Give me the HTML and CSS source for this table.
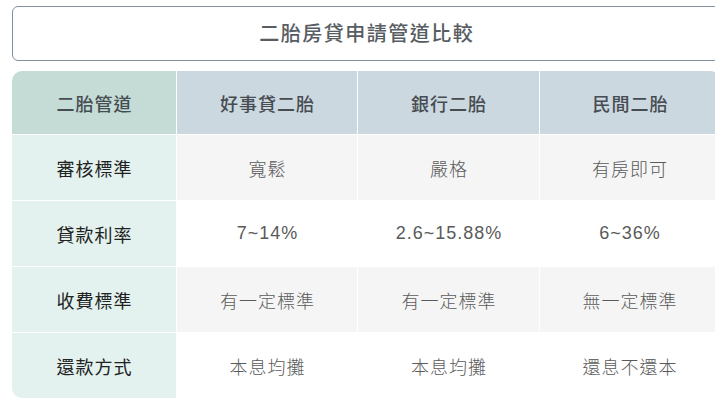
FILE: index.html
```html
<!DOCTYPE html>
<html lang="zh-Hant">
<head>
<meta charset="utf-8">
<link rel="stylesheet" href="styles.css">
</head>
<body>
<div class="wrap">
  <div class="title">二胎房貸申請管道比較</div>
  <table class="cmp">
    <thead>
      <tr>
        <th class="c1">二胎管道</th>
        <th class="c2">好事貸二胎</th>
        <th class="c3">銀行二胎</th>
        <th class="c4">民間二胎</th>
      </tr>
    </thead>
    <tbody>
      <tr class="alt">
        <td class="lbl">審核標準</td><td>寬鬆</td><td>嚴格</td><td>有房即可</td>
      </tr>
      <tr>
        <td class="lbl">貸款利率</td><td>7~14%</td><td>2.6~15.88%</td><td>6~36%</td>
      </tr>
      <tr class="alt">
        <td class="lbl">收費標準</td><td>有一定標準</td><td>有一定標準</td><td>無一定標準</td>
      </tr>
      <tr>
        <td class="lbl">還款方式</td><td>本息均攤</td><td>本息均攤</td><td>還息不還本</td>
      </tr>
    </tbody>
  </table>
</div>
</body>
</html>
```
FILE: styles.css
```css
html, body {
  margin: 0;
  padding: 0;
  background: #ffffff;
  overflow: hidden;
}
body {
  font-family: "Liberation Sans", "Noto Sans CJK TC", sans-serif;
}
.wrap {
  width: 708px;
  padding: 6px 0 0 12px;
}
.title {
  box-sizing: border-box;
  height: 55px;
  padding-bottom: 2px;
  border: 1px solid #7f91a1;
  border-radius: 6px;
  display: flex;
  align-items: center;
  justify-content: center;
  font-size: 20px;
  letter-spacing: 1.5px;
  text-indent: 1.5px;
  color: #575d63;
  font-weight: 500;
}
.cmp {
  margin-top: 10px;
  width: 708px;
  border-collapse: separate;
  border-spacing: 0;
  table-layout: fixed;
}
.cmp th, .cmp td {
  text-align: center;
  border-right: 1px solid #ffffff;
  border-bottom: 1px solid #ffffff;
  padding: 0;
  letter-spacing: 1px;
  text-indent: 1px;
}
.cmp th {
  height: 63px;
  background: #ccd8df;
  color: #464c52;
  font-size: 18px;
  font-weight: 500;
}
.cmp th.c1 { width: 164px; background: #c4dcd5; border-top-left-radius: 10px; }
.cmp th.c2 { width: 180px; }
.cmp th.c3 { width: 181px; }
.cmp th.c4 { border-right: none; border-top-right-radius: 10px; }
.cmp td {
  height: 65px;
  font-size: 18px;
  font-weight: 300;
  color: #5a5a5a;
  background: #ffffff;
}
.cmp tr.alt td { background: #f5f5f5; }
.cmp td.lbl, .cmp tr.alt td.lbl {
  background: #e3f2ef;
  color: #222222;
  font-weight: 400;
}
.cmp tbody tr:last-child td { border-bottom: none; }
.cmp tbody tr:last-child td.lbl { border-bottom-left-radius: 10px; }
```
